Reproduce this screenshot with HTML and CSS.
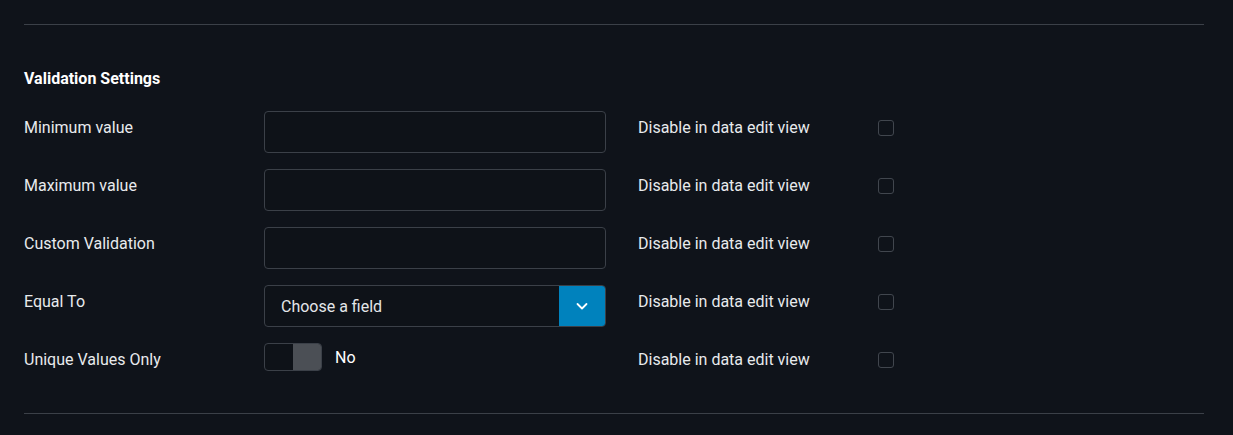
FILE: index.html
```html
<!DOCTYPE html>
<html>
<head>
<meta charset="utf-8">
<link rel="stylesheet" href="styles.css">
</head>
<body>
<div class="panel">
  <hr class="divider">
  <h3 class="heading">Validation Settings</h3>
  <div class="rows">
    <div class="label">Minimum value</div>
    <div class="input"></div>
    <div class="side">Disable in data edit view</div>
    <div class="check"><span class="box"></span></div>

    <div class="label">Maximum value</div>
    <div class="input"></div>
    <div class="side">Disable in data edit view</div>
    <div class="check"><span class="box"></span></div>

    <div class="label">Custom Validation</div>
    <div class="input"></div>
    <div class="side">Disable in data edit view</div>
    <div class="check"><span class="box"></span></div>

    <div class="label">Equal To</div>
    <div class="select">
      <span class="select-text">Choose a field</span>
      <span class="select-btn">
        <svg width="14" height="14" viewBox="0 0 14 14"><path d="M2.5 5 L7 9.5 L11.5 5" fill="none" stroke="#ffffff" stroke-width="1.8" stroke-linecap="round" stroke-linejoin="round"/></svg>
      </span>
    </div>
    <div class="side">Disable in data edit view</div>
    <div class="check"><span class="box"></span></div>

    <div class="label">Unique Values Only</div>
    <div class="toggle-wrap">
      <span class="toggle"><span class="knob"></span></span>
      <span class="toggle-text">No</span>
    </div>
    <div class="side">Disable in data edit view</div>
    <div class="check"><span class="box"></span></div>
  </div>
  <hr class="divider bottom">
</div>
</body>
</html>
```
FILE: styles.css
```css
html, body {
  margin: 0;
  padding: 0;
  background: #0f131a;
}
body {
  font-family: Roboto, "Liberation Sans", sans-serif;
  color: #e8eaed;
  font-size: 16px;
}
.panel {
  padding: 24px 29px 0 24px;
}
.divider {
  margin: 0;
  border: 0;
  height: 1px;
  background: #3b4048;
}
.heading {
  margin: 0;
  padding-top: 44px;
  font-size: 16px;
  font-weight: 700;
  line-height: 20px;
  color: #ffffff;
}
.rows {
  margin-top: 22px;
  display: grid;
  grid-template-columns: 240px 342px 32px 240px 16px;
  grid-auto-rows: 42px;
  row-gap: 16px;
}
.label {
  grid-column: 1;
  padding-top: 7px;
  line-height: 20px;
}
.input {
  grid-column: 2;
  box-sizing: border-box;
  border: 1px solid #3b4048;
  border-radius: 4px;
  background: #0e1218;
}
.side {
  grid-column: 4;
  padding-top: 7px;
  line-height: 20px;
}
.check {
  grid-column: 5;
  padding-top: 9px;
}
.box {
  display: block;
  box-sizing: border-box;
  width: 16px;
  height: 16px;
  border: 1px solid #41464e;
  border-radius: 3px;
}
.select {
  grid-column: 2;
  display: flex;
  box-sizing: border-box;
  border: 1px solid #3b4048;
  border-radius: 4px;
  background: #0e1218;
  overflow: hidden;
}
.select-text {
  flex: 1;
  padding-left: 16px;
  padding-top: 1px;
  line-height: 40px;
  color: #e4e6e9;
}
.select-btn {
  width: 46px;
  background: #0082bd;
  display: flex;
  align-items: center;
  justify-content: center;
}
.toggle-wrap {
  grid-column: 2;
  display: flex;
  align-items: flex-start;
  gap: 13px;
}
.toggle {
  box-sizing: border-box;
  width: 58px;
  height: 28px;
  border: 1px solid #3b4048;
  border-radius: 4px;
  background: #0e1218;
  display: flex;
  justify-content: flex-end;
  overflow: hidden;
}
.knob {
  width: 28px;
  height: 100%;
  background: #4b4f55;
}
.toggle-text {
  padding-top: 1px;
  line-height: 28px;
  color: #ffffff;
}
.bottom {
  margin-top: 28px;
}
```
